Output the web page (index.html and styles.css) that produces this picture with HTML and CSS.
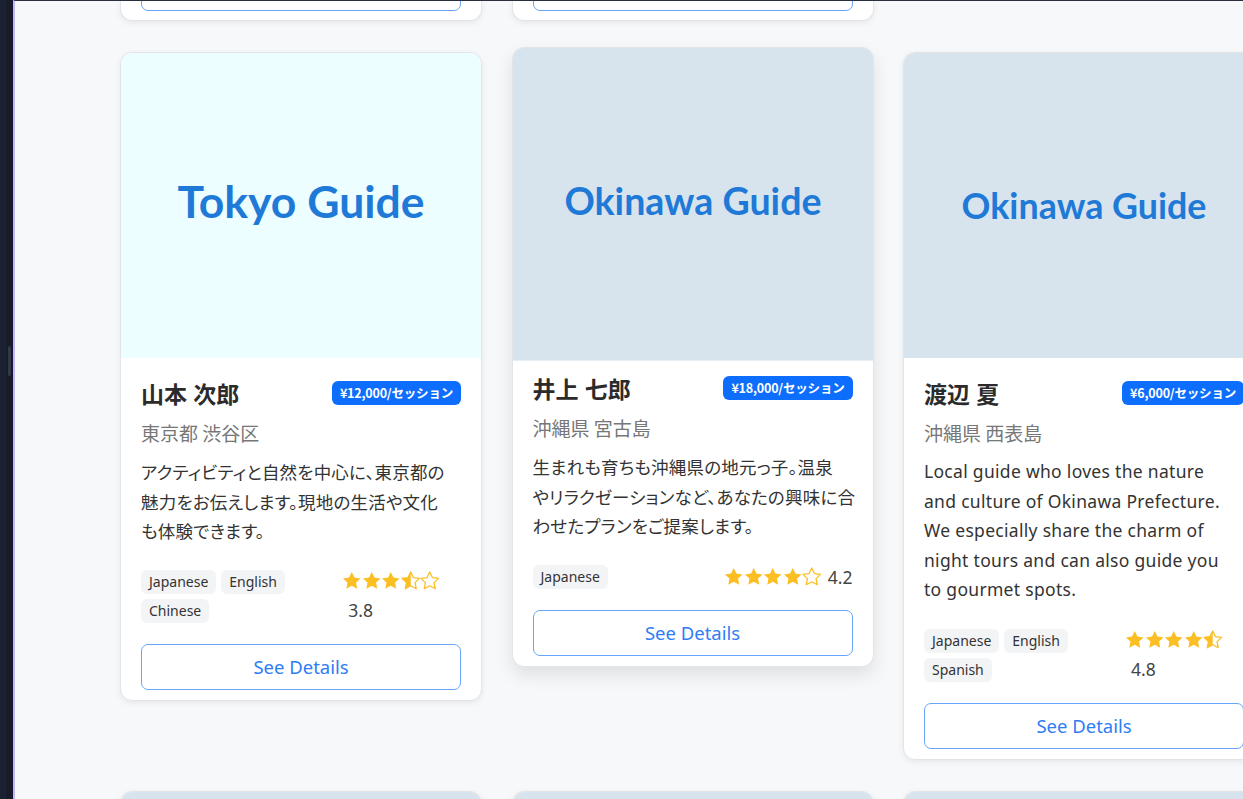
FILE: index.html
```html
<!DOCTYPE html>
<html lang="ja">
<head>
<meta charset="utf-8">
<title>Guides</title>
<link rel="stylesheet" href="styles.css">
</head>
<body>
<aside class="rail"><div class="rail-track"><div class="rail-thumb"></div></div></aside>
<main class="main">
  <div class="grid">
    <div class="card stub"><div class="btn-edge"></div></div>
    <div class="card stub"><div class="btn-edge"></div></div>
    <div class="stub-empty"></div>

    <article class="card">
      <div class="card-img tokyo"><span>Tokyo Guide</span></div>
      <div class="card-body">
        <div class="head"><h3 class="name">山本 次郎</h3><span class="price">¥12,000/セッション</span></div>
        <div class="loc">東京都 渋谷区</div>
        <p class="desc ja">アクティビティと自然を中心に、東京都の<br>魅力をお伝えします。現地の生活や文化<br>も体験できます。</p>
        <div class="foot">
          <div class="tags"><span class="tag">Japanese</span><span class="tag">English</span><span class="tag">Chinese</span></div>
          <div class="rating">
            <span class="stars">
              <svg viewBox="0 0 24 24"><path class="f" d="M12 1.2l3.3 6.9 7.5 1-5.5 5.2 1.4 7.5L12 18.2l-6.7 3.6 1.4-7.5L1.2 9.1l7.5-1z"/></svg><svg viewBox="0 0 24 24"><path class="f" d="M12 1.2l3.3 6.9 7.5 1-5.5 5.2 1.4 7.5L12 18.2l-6.7 3.6 1.4-7.5L1.2 9.1l7.5-1z"/></svg><svg viewBox="0 0 24 24"><path class="f" d="M12 1.2l3.3 6.9 7.5 1-5.5 5.2 1.4 7.5L12 18.2l-6.7 3.6 1.4-7.5L1.2 9.1l7.5-1z"/></svg><svg viewBox="0 0 24 24"><path class="e" d="M12 1.2l3.3 6.9 7.5 1-5.5 5.2 1.4 7.5L12 18.2l-6.7 3.6 1.4-7.5L1.2 9.1l7.5-1z"/><path class="f" d="M12 1.2L12 18.2l-6.7 3.6 1.4-7.5L1.2 9.1l7.5-1z"/></svg><svg viewBox="0 0 24 24"><path class="e" d="M12 1.2l3.3 6.9 7.5 1-5.5 5.2 1.4 7.5L12 18.2l-6.7 3.6 1.4-7.5L1.2 9.1l7.5-1z"/></svg>
            </span>
            <span class="score">3.8</span>
          </div>
        </div>
        <button class="btn">See Details</button>
      </div>
    </article>

    <article class="card raised">
      <div class="card-img okinawa"><span>Okinawa Guide</span></div>
      <div class="card-body">
        <div class="head"><h3 class="name">井上 七郎</h3><span class="price">¥18,000/セッション</span></div>
        <div class="loc">沖縄県 宮古島</div>
        <p class="desc ja">生まれも育ちも沖縄県の地元っ子。温泉<br>やリラクゼーションなど、あなたの興味に合<br>わせたプランをご提案します。</p>
        <div class="foot">
          <div class="tags"><span class="tag">Japanese</span></div>
          <div class="rating">
            <span class="stars">
              <svg viewBox="0 0 24 24"><path class="f" d="M12 1.2l3.3 6.9 7.5 1-5.5 5.2 1.4 7.5L12 18.2l-6.7 3.6 1.4-7.5L1.2 9.1l7.5-1z"/></svg><svg viewBox="0 0 24 24"><path class="f" d="M12 1.2l3.3 6.9 7.5 1-5.5 5.2 1.4 7.5L12 18.2l-6.7 3.6 1.4-7.5L1.2 9.1l7.5-1z"/></svg><svg viewBox="0 0 24 24"><path class="f" d="M12 1.2l3.3 6.9 7.5 1-5.5 5.2 1.4 7.5L12 18.2l-6.7 3.6 1.4-7.5L1.2 9.1l7.5-1z"/></svg><svg viewBox="0 0 24 24"><path class="f" d="M12 1.2l3.3 6.9 7.5 1-5.5 5.2 1.4 7.5L12 18.2l-6.7 3.6 1.4-7.5L1.2 9.1l7.5-1z"/></svg><svg viewBox="0 0 24 24"><path class="e" d="M12 1.2l3.3 6.9 7.5 1-5.5 5.2 1.4 7.5L12 18.2l-6.7 3.6 1.4-7.5L1.2 9.1l7.5-1z"/></svg>
            </span>
            <span class="score">4.2</span>
          </div>
        </div>
        <button class="btn">See Details</button>
      </div>
    </article>

    <article class="card">
      <div class="card-img okinawa"><span>Okinawa Guide</span></div>
      <div class="card-body">
        <div class="head"><h3 class="name">渡辺 夏</h3><span class="price">¥6,000/セッション</span></div>
        <div class="loc">沖縄県 西表島</div>
        <p class="desc en">Local guide who loves the nature<br>and culture of Okinawa Prefecture.<br>We especially share the charm of<br>night tours and can also guide you<br>to gourmet spots.</p>
        <div class="foot">
          <div class="tags"><span class="tag">Japanese</span><span class="tag">English</span><span class="tag">Spanish</span></div>
          <div class="rating">
            <span class="stars">
              <svg viewBox="0 0 24 24"><path class="f" d="M12 1.2l3.3 6.9 7.5 1-5.5 5.2 1.4 7.5L12 18.2l-6.7 3.6 1.4-7.5L1.2 9.1l7.5-1z"/></svg><svg viewBox="0 0 24 24"><path class="f" d="M12 1.2l3.3 6.9 7.5 1-5.5 5.2 1.4 7.5L12 18.2l-6.7 3.6 1.4-7.5L1.2 9.1l7.5-1z"/></svg><svg viewBox="0 0 24 24"><path class="f" d="M12 1.2l3.3 6.9 7.5 1-5.5 5.2 1.4 7.5L12 18.2l-6.7 3.6 1.4-7.5L1.2 9.1l7.5-1z"/></svg><svg viewBox="0 0 24 24"><path class="f" d="M12 1.2l3.3 6.9 7.5 1-5.5 5.2 1.4 7.5L12 18.2l-6.7 3.6 1.4-7.5L1.2 9.1l7.5-1z"/></svg><svg viewBox="0 0 24 24"><path class="e" d="M12 1.2l3.3 6.9 7.5 1-5.5 5.2 1.4 7.5L12 18.2l-6.7 3.6 1.4-7.5L1.2 9.1l7.5-1z"/><path class="f" d="M12 1.2L12 18.2l-6.7 3.6 1.4-7.5L1.2 9.1l7.5-1z"/></svg>
            </span>
            <span class="score">4.8</span>
          </div>
        </div>
        <button class="btn">See Details</button>
      </div>
    </article>

    <article class="card"><div class="card-img okinawa"></div></article>
    <article class="card"><div class="card-img okinawa"></div></article>
    <article class="card"><div class="card-img okinawa"></div></article>
  </div>
</main>
</body>
</html>
```

FILE: styles.css
```css
* { box-sizing: border-box; }
html, body { margin: 0; padding: 0; height: 100%; }
body {
  display: flex;
  overflow: hidden;
  background: #f7f8fa;
  font-family: "Noto Sans", "Noto Sans CJK JP", sans-serif;
  color: #333;
}
.rail {
  width: 13px;
  flex: none;
  background: #1c2131;
  padding-left: 6px;
}
.rail-track {
  height: 100%;
  background: #181c2a;
  padding-top: 346px;
  padding-left: 2px;
}
.rail-thumb {
  width: 3px;
  height: 30px;
  border-radius: 2px;
  background: #32374a;
}
.main {
  flex: 1;
  min-width: 0;
  height: 799px;
  overflow: hidden;
  border-left: 2px solid #c4b5fd;
  border-top: 1px solid #2a2f3f;
  padding-left: 105px;
}
.grid {
  display: grid;
  grid-template-columns: repeat(3, 362px);
  column-gap: 29.5px;
  row-gap: 31px;
  align-items: start;
}
.card {
  background: #fff;
  border: 1px solid #e2e4e8;
  border-radius: 12px;
  box-shadow: 0 2px 6px rgba(0, 0, 0, 0.07);
  overflow: hidden;
}
.stub {
  height: 20px;
  border-top: none;
  border-radius: 0 0 12px 12px;
  display: flex;
  flex-direction: column;
  justify-content: flex-end;
  padding: 0 20px 9px;
}
.btn-edge {
  flex: none;
  height: 46px;
  border: 1.5px solid #69a4f8;
  border-radius: 7px;
  background: #fff;
}
.raised {
  transform: translateY(-5px);
  box-shadow: 0 8px 18px rgba(0, 0, 0, 0.10);
}
.card-img {
  height: 305px;
  display: flex;
  align-items: center;
  justify-content: center;
  font-family: Lato, "Noto Sans", sans-serif;
  font-weight: 700;
  color: #1f7ad7;
}
.tokyo { background: #ecfeff; font-size: 44.5px; padding-bottom: 10px; }
.okinawa { background: #d8e4ed; font-size: 35.8px; }
.raised .card-img { transform: scale(1.05); }
.card-body {
  padding: 20px 20px 10px;
}
.head {
  display: flex;
  align-items: center;
  justify-content: space-between;
}
.name {
  margin: 0;
  font-family: "Noto Sans CJK JP", sans-serif;
  font-size: 23px;
  font-weight: 700;
  line-height: 30px;
  word-spacing: 1px;
  color: #2b2b2b;
}
.price {
  background: #0d6efd;
  color: #fff;
  font-family: "Noto Sans CJK JP", sans-serif;
  font-weight: 700;
  font-size: 12.5px;
  line-height: 18px;
  padding: 3px 8px;
  border-radius: 6px;
  letter-spacing: -0.2px;
}
.loc {
  margin-top: 12px;
  font-family: "Noto Sans CJK JP", sans-serif;
  font-size: 19px;
  line-height: 25px;
  color: #777;
}
.desc {
  margin: 12px 0 0;
  line-height: 29.5px;
  color: #333;
  white-space: nowrap;
}
.desc.en {
  font-size: 17.5px;
  letter-spacing: 0.3px;
}
.desc.ja {
  font-family: "Noto Sans CJK JP", sans-serif;
  font-size: 17.5px;
  font-feature-settings: "palt";
  letter-spacing: 0.2px;
}
.foot {
  margin-top: 24px;
  display: flex;
  align-items: center;
  justify-content: space-between;
}
.tags {
  display: flex;
  flex-wrap: wrap;
  gap: 5px;
}
.tag {
  background: #f3f4f6;
  border-radius: 6px;
  padding: 0 8px;
  height: 24px;
  line-height: 24px;
  font-size: 14px;
  color: #333;
}
.rating {
  display: flex;
  flex-wrap: wrap;
  align-items: center;
  row-gap: 9px;
}
.stars {
  display: flex;
}
.stars svg {
  width: 19.5px;
  height: 19.5px;
  display: block;
}
.stars .f { fill: #fbbf24; }
.stars .e { fill: none; stroke: #fbbf24; stroke-width: 1.6; stroke-linejoin: round; }
.score {
  margin-left: 6px;
  font-size: 17.5px;
  line-height: 22px;
  color: #444;
}
.btn {
  display: block;
  width: 100%;
  height: 46px;
  margin-top: 21px;
  background: #fff;
  border: 1.5px solid #69a4f8;
  border-radius: 7px;
  color: #2f7df6;
  font-family: "Noto Sans", sans-serif;
  font-size: 18.5px;
}
```
